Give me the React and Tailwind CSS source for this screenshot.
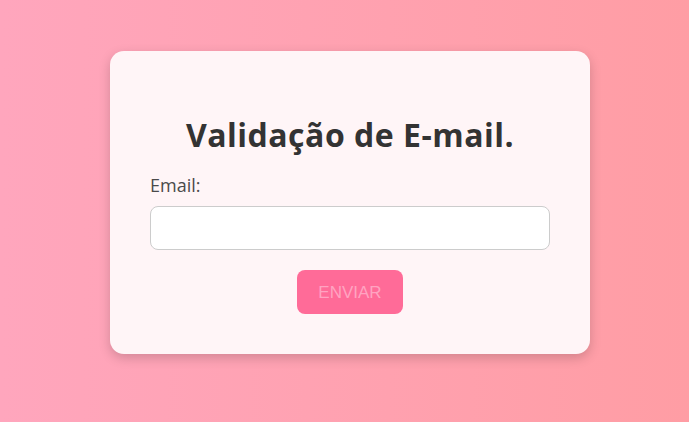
import React, { useState } from 'react';

const App = () => {
  const [email, setEmail] = useState('');

  return (
    <div className="min-h-screen w-full bg-gradient-to-r from-[#ffa6bd] to-[#ff9da4] flex justify-center pt-[51px] pl-[11px] font-['Open_Sans',sans-serif]">
      <div className="w-[480px] h-[303px] bg-[#fff5f7] rounded-[14px] shadow-[0_4px_12px_rgba(0,0,0,0.18)] px-10 pt-[68px]">
        <h1 className="text-center text-[32px] leading-none font-bold text-[#333] tracking-[0.5px]">
          Validação de E-mail.
        </h1>
        <label className="block mt-[24px] text-[18px] leading-5 text-[#4a4a4a]">Email:</label>
        <input
          type="email"
          value={email}
          onChange={(e) => setEmail(e.target.value)}
          className="block w-full h-[44px] mt-[11px] bg-white border border-[#ccc] rounded-[8px] px-3 outline-none"
        />
        <div className="flex justify-center mt-[20px]">
          <button className="w-[106px] h-[44px] bg-[#ff6b98] rounded-[8px] text-[#ffa3c1] text-[17px] pt-[2px] font-['Liberation_Sans',sans-serif]">
            ENVIAR
          </button>
        </div>
      </div>
    </div>
  );
};

export default App;
